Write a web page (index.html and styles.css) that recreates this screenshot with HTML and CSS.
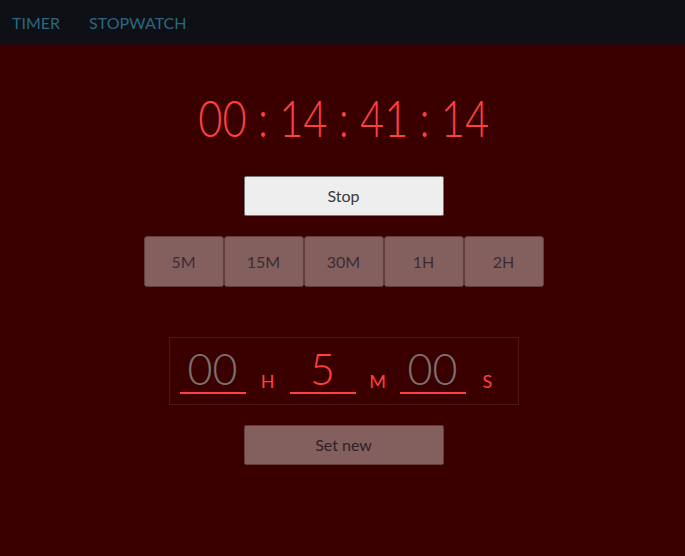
FILE: index.html
```
<!DOCTYPE html>
<html>
<head>
<meta charset="utf-8">
<link rel="stylesheet" href="styles.css">
</head>
<body>
<nav class="nav">
  <a class="nav-link">TIMER</a>
  <a class="nav-link">STOPWATCH</a>
</nav>
<main class="main">
  <div class="clock">00 : 14 : 41 : 14</div>
  <button class="btn btn-light">Stop</button>
  <div class="presets">
    <button class="preset">5M</button>
    <button class="preset">15M</button>
    <button class="preset">30M</button>
    <button class="preset">1H</button>
    <button class="preset">2H</button>
  </div>
  <div class="setter">
    <span class="field muted">00</span><span class="unit">H</span>
    <span class="field">5</span><span class="unit">M</span>
    <span class="field muted">00</span><span class="unit">S</span>
  </div>
  <button class="btn btn-dim">Set new</button>
</main>
</body>
</html>
```
FILE: styles.css
```
* { box-sizing: border-box; }
html, body { margin: 0; height: 100%; }
body {
  background: #3a0000;
  font-family: Lato, "Liberation Sans", sans-serif;
}
.nav {
  height: 45px;
  background: #0e1015;
  display: flex;
  align-items: center;
  padding: 0 12px;
  gap: 29px;
  border-bottom: 1px solid #25060a;
}
.nav-link {
  color: #2b6880;
  font-size: 16px;
}
.main {
  display: flex;
  flex-direction: column;
  align-items: center;
  padding: 40px 0 0 2px;
}
.clock {
  color: #ff4040;
  font-size: 52px;
  font-weight: 300;
  line-height: 64px;
  letter-spacing: 0;
  transform: scaleX(0.8);
}
.btn {
  width: 200px;
  height: 40px;
  font-family: inherit;
  font-size: 16px;
  font-weight: 400;
  border-radius: 2px;
}
.btn-light {
  margin-top: 27px;
  background: #eeeeee;
  border: 1px solid #777;
  color: #3a3a3a;
  padding-bottom: 3px;
}
.presets {
  display: flex;
  margin-top: 20px;
}
.preset {
  width: 80px;
  height: 51px;
  background: #835f5e;
  border: 1px solid #633c3c;
  border-radius: 3px;
  color: #3b2c36;
  font-family: inherit;
  font-size: 16px;
}
.setter {
  margin-top: 50px;
  width: 350px;
  height: 68px;
  border: 1px solid #4e1818;
  display: flex;
  align-items: flex-end;
  padding: 0 0 10px 10px;
}
.field {
  width: 66px;
  border-bottom: 2px solid #ff4040;
  color: #ff4040;
  font-size: 43px;
  font-weight: 300;
  line-height: 46px;
  text-align: center;
}
.field.muted { color: #7c7070; }
.unit {
  color: #ff4040;
  font-size: 18px;
  width: 44px;
  text-align: center;
  padding-bottom: 2px;
}
.btn-dim {
  margin-top: 20px;
  background: #835f5e;
  border: 1px solid #633c3c;
  color: #2e2228;
  padding-bottom: 3px;
}
```
